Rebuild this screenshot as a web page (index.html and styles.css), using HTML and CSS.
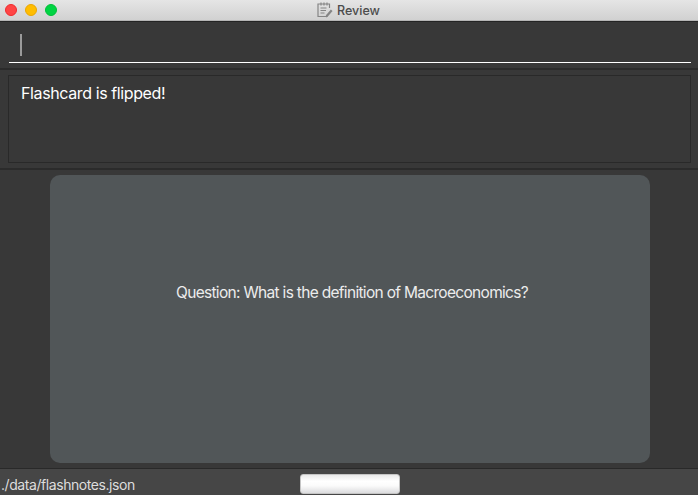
FILE: index.html
```html
<!DOCTYPE html>
<html lang="en">
<head>
<meta charset="utf-8">
<title>Review</title>
<link rel="stylesheet" href="styles.css">
</head>
<body>
<div class="window">
  <header class="titlebar">
    <div class="controls"><i class="dot close"></i><i class="dot minimize"></i><i class="dot zoom"></i></div>
    <div class="title">
      <svg class="icon" width="16" height="16" viewBox="0 0 16 16" fill="none" stroke="#858585">
        <path d="M12.500 6V2H1v12.500h8.500L10.500 13" stroke-width="1.200"/>
        <path d="M4 .5v3M7 .5v3M10 .5v3" stroke-width="1.200"/>
        <path d="M3.500 6h6M3.500 8.500h5.500M3.500 11h4" stroke-width="1"/>
        <path d="M14.700 8.200l-4.700 5.600" stroke-width="2.200"/>
        <path d="M9.600 13l-.6 2 2-1" stroke-width="1"/>
      </svg>
      <span>Review</span>
    </div>
  </header>
  <section class="command"><div class="field"><span class="caret"></span></div></section>
  <section class="result"><div class="message"><span class="message-text">Flashcard is flipped!</span></div></section>
  <main class="stage"><div class="card"><span class="question">Question: What is the definition of Macroeconomics?</span></div></main>
  <footer class="status">
    <span class="path">./data/flashnotes.json</span>
    <button class="action" type="button" aria-label="Action"></button>
  </footer>
</div>
</body>
</html>
```
FILE: styles.css
```css
* { box-sizing: border-box; }
body { margin: 0; overflow: hidden; background: #383838; font-family: Inter, "Liberation Sans", sans-serif; }
.window { width: 698px; height: 495px; display: flex; flex-direction: column; }
.titlebar {
  height: 22px;
  display: grid;
  grid-template-columns: 1fr auto 1fr;
  background: linear-gradient(#e5e5e5, #d0d0d0);
  border-bottom: 1px solid #242424;
  box-shadow: inset 0 -1px #b5b5b5;
}
.controls { display: flex; gap: 8px; padding: 4px 0 0 5px; }
.dot { width: 12px; height: 12px; border-radius: 50%; border: 1px solid; }
.close { background: #ff4545; border-color: #f02a2d; }
.minimize { background: #ffbd00; border-color: #eba600; }
.zoom { background: #00d443; border-color: #00bf38; }
.title { display: flex; align-items: flex-start; gap: 4px; margin-left: -1px; padding-top: 2px; font-size: 12.5px; font-weight: 500; letter-spacing: 0; line-height: 17px; color: #4c4c4c; }
.icon { display: block; }
.command { height: 48px; padding: 0 7px 0 9px; border-bottom: 2px solid #2b2b2b; }
.field { height: 41px; padding: 12px 0 0 11px; border-bottom: 1px solid #fff; }
.caret { display: block; width: 2px; height: 22px; background: #9b9b9b; }
.result { height: 100px; padding: 5px 7px 5px 8px; border-bottom: 2px solid #2b2b2b; }
.message { height: 88px; padding: 6px 12px; border: 1px solid #292929; color: #fff; }
.message-text, .question { line-height: 22px; white-space: nowrap; }
.message-text { display: block; font-size: 16px; letter-spacing: -.39px; }
.stage { height: 298px; padding: 5px 48px 0 50px; }
.card { height: 288px; display: flex; justify-content: center; padding: 107px 0 0 4px; border-radius: 10px; background: #515658; }
.question { font-size: 15.5px; letter-spacing: -.69px; color: #ececec; }
.status { height: 27px; display: grid; grid-template-columns: 300px 100px 1fr; background: #464646; border-top: 1px solid #292929; }
.path { padding: 7px 0 0 1px; font-size: 14px; line-height: 18px; letter-spacing: -.43px; color: #ddd; }
.action { width: 100px; height: 20px; margin: 5px 0 0; padding: 0; border: 1px solid #c5c5c5; border-radius: 3px; background: linear-gradient(#e9e9e9, #fff 35%, #fbfbfb 60%, #dcdcde); }
```
